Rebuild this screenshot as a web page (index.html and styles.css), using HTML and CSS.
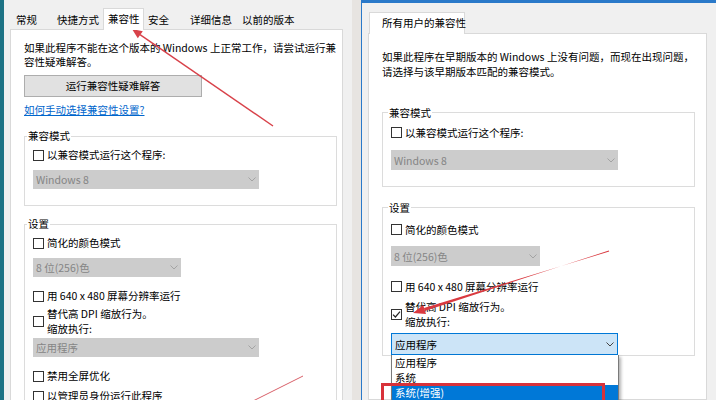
FILE: index.html
```html
<!DOCTYPE html>
<html>
<head>
<meta charset="utf-8">
<link rel="stylesheet" href="styles.css">
</head>
<body>
<div class="screen">
  <div class="desk"></div>

  <div class="win win-left">
    <div class="tabs">
      <div class="tab t1">常规</div>
      <div class="tab t2">快捷方式</div>
      <div class="tab t3 sel">兼容性</div>
      <div class="tab t4">安全</div>
      <div class="tab t5">详细信息</div>
      <div class="tab t6">以前的版本</div>
    </div>
    <div class="panel lp">
      <p class="desc">如果此程序不能在这个版本的 Windows 上正常工作，请尝试运行兼<br>容性疑难解答。</p>
      <div class="btn">运行兼容性疑难解答</div>
      <a class="link">如何手动选择兼容性设置?</a>

      <fieldset class="grp g1">
        <legend>兼容模式</legend>
        <div class="chk"><span class="box"></span>以兼容模式运行这个程序:</div>
        <div class="dd dis long s-a">Windows 8<svg class="chev" width="8" height="5" viewBox="0 0 8 5"><path d="M0.5 0.5 L4 4 L7.5 0.5"/></svg></div>
      </fieldset>

      <fieldset class="grp g2">
        <legend>设置</legend>
        <div class="chk"><span class="box"></span>简化的颜色模式</div>
        <div class="dd dis short s-a">8 位(256)色<svg class="chev" width="8" height="5" viewBox="0 0 8 5"><path d="M0.5 0.5 L4 4 L7.5 0.5"/></svg></div>
        <div class="chk s-b"><span class="box"></span>用 640 x 480 屏幕分辨率运行</div>
        <div class="chk two s-c"><span class="box"></span><span>替代高 DPI 缩放行为。<br>缩放执行:</span></div>
        <div class="dd dis long s-d">应用程序<svg class="chev" width="8" height="5" viewBox="0 0 8 5"><path d="M0.5 0.5 L4 4 L7.5 0.5"/></svg></div>
        <div class="chk s-b"><span class="box"></span>禁用全屏优化</div>
        <div class="chk s-e"><span class="box"></span>以管理员身份运行此程序</div>
      </fieldset>
    </div>
  </div>

  <div class="gap"></div>

  <div class="win win-right">
    <div class="tabs">
      <div class="tab sel rtab">所有用户的兼容性</div>
    </div>
    <div class="panel rp">
      <p class="desc">如果此程序在早期版本的 Windows 上没有问题，而现在出现问题，<br>请选择与该早期版本匹配的兼容模式。</p>

      <fieldset class="grp g1">
        <legend>兼容模式</legend>
        <div class="chk"><span class="box"></span>以兼容模式运行这个程序:</div>
        <div class="dd dis long r-a">Windows 8<svg class="chev" width="8" height="5" viewBox="0 0 8 5"><path d="M0.5 0.5 L4 4 L7.5 0.5"/></svg></div>
      </fieldset>

      <fieldset class="grp g2">
        <legend>设置</legend>
        <div class="chk"><span class="box"></span>简化的颜色模式</div>
        <div class="dd dis short r-b">8 位(256)色<svg class="chev" width="8" height="5" viewBox="0 0 8 5"><path d="M0.5 0.5 L4 4 L7.5 0.5"/></svg></div>
        <div class="chk r-c"><span class="box"></span>用 640 x 480 屏幕分辨率运行</div>
        <div class="chk two r-d"><span class="box checked"><svg width="9" height="9" viewBox="0 0 9 9"><path d="M1 4.6 L3.4 7 L8 1.6"/></svg></span><span>替代高 DPI 缩放行为。<br>缩放执行:</span></div>
        <div class="combo">
          <div class="dd active long">应用程序<svg class="chev" width="8" height="5" viewBox="0 0 8 5"><path d="M0.5 0.5 L4 4 L7.5 0.5"/></svg></div>
          <div class="menu">
            <div class="item">应用程序</div>
            <div class="item">系统</div>
            <div class="item hi">系统(增强)</div>
          </div>
          <div class="redbox"></div>
        </div>
      </fieldset>
    </div>
  </div>

  <svg class="marks" width="716" height="400" viewBox="0 0 716 400">
    <line x1="140" y1="34.7" x2="273" y2="126" stroke="#d8424a" stroke-width="1.4"/>
    <polygon points="132,29 142.8,31.2 137.8,38.3" fill="#d8424a"/>
    <polygon points="424.8,310.9 424,307.9 609.2,251.5 608.8,250.5" fill="#d93a40"/>
    <polygon points="413,313 426,314 423.2,304.9" fill="#d93a40"/>
    <line x1="303" y1="376" x2="253" y2="401" stroke="#d8606a" stroke-width="1"/>
  </svg>
</div>
</body>
</html>
```

FILE: styles.css
```css
* { box-sizing: border-box; }
html, body { margin: 0; padding: 0; }
body {
  width: 716px;
  height: 400px;
  overflow: hidden;
  font-family: "Noto Sans CJK SC", "Microsoft YaHei", sans-serif;
  font-size: 10.5px;
  color: #000;
  background: #f0f0f0;
}
.screen {
  position: relative;
  display: flex;
  width: 716px;
  height: 400px;
  overflow: hidden;
}
.desk { flex: none; width: 4px; background: #1d7385; }
.gap { flex: none; width: 9px; background: #e7e4e1; }

.win {
  flex: none;
  display: flex;
  flex-direction: column;
  height: 400px;
  background: #f0f0f0;
}
.win-left { width: 348px; padding: 8px 9px 0 6px; }
.win-right {
  width: 355px;
  border-top: 3px solid #2a79c9;
  border-left: 1px solid #2a79c9;
  padding: 9px 9px 0 6px;
}

.tabs { display: flex; align-items: flex-end; height: 21px; flex: none; }
.tab { height: 19px; line-height: 19px; white-space: nowrap; }
.tab.sel {
  position: relative;
  z-index: 1;
  height: 22px;
  margin-bottom: -1px;
  line-height: 20px;
  background: #fff;
  border: 1px solid #d9d9d9;
  border-bottom: none;
}
.t1 { width: 41px; padding-left: 6px; }
.t2 { width: 52px; padding-left: 6px; }
.t3 { width: 41px; padding-left: 4px; }
.t4 { width: 40px; padding-left: 4px; }
.t5 { width: 53px; padding-left: 6px; }
.t6 { width: 62px; padding-left: 5px; }
.rtab { margin-left: 1px; width: 96px; padding-left: 12px; }

.panel {
  flex: 1;
  background: #fff;
  border: 1px solid #d9d9d9;
}
.lp { padding: 11px 5px 0 13px; }
.rp { padding: 15px 11px 0 13px; }

.desc { margin: 0; line-height: 14px; white-space: nowrap; }
.rp .desc { line-height: 15px; }

.btn {
  margin-top: 6px;
  width: 178px;
  height: 22px;
  line-height: 20px;
  text-align: center;
  background: #e1e1e1;
  border: 1px solid #adadad;
}
.link {
  display: block;
  margin-top: 6px;
  line-height: 14px;
  color: #0066cc;
  text-decoration: underline;
}

.grp {
  margin: 12px 0 0;
  padding: 5px 0 16px 8px;
  border: 1px solid #dcdcdc;
  min-width: 0;
}
.grp legend { padding: 0 1px; margin-left: -6px; line-height: 14px; }
.lp .g2 { margin-top: 11px; padding-bottom: 0; }

.rp .grp legend { margin-left: -3px; line-height: 15px; }
.rp .g1 { margin-top: 26px; }
.rp .g2 { margin-top: 13px; padding-top: 7px; padding-bottom: 0; }

.chk { display: flex; align-items: center; line-height: 14px; white-space: nowrap; }
.rp .chk { line-height: 15px; }
.chk.two { line-height: 15px; }
.box {
  flex: none;
  width: 11px;
  height: 11px;
  margin-right: 3px;
  border: 1px solid #333;
  background: #fff;
  display: flex;
  align-items: center;
  justify-content: center;
}
.box svg path { fill: none; stroke: #222; stroke-width: 1.2; }

.dd {
  display: flex;
  align-items: center;
  justify-content: space-between;
  height: 19px;
  padding: 0 3px 0 3px;
  white-space: nowrap;
}
.dd.dis { background: #cccccc; color: #858585; }
.dd.long { width: 226px; }
.dd.short { width: 148px; }
.chev path { fill: none; stroke: #a3a3a3; stroke-width: 1; }
.rp .dd { height: 20px; }
.rp .dd.long { width: 227px; }
.rp .dd.short { width: 149px; }
.dd.active {
  height: 22px;
  padding-left: 3px;
  background: #cce4f7;
  border: 1px solid #0078d7;
  color: #000;
}
.dd.active .chev path { stroke: #444; }

/* left spacing */
.s-a { margin-top: 8px; }
.s-b { margin-top: 12px; }
.s-c { margin-top: 3px; }
.s-d { margin-top: 2px; }
.s-e { margin-top: 6px; }

/* right spacing */
.r-a { margin-top: 10px; }
.r-b { margin-top: 9px; }
.r-c { margin-top: 13px; }
.r-d { margin-top: 5px; }

.combo { position: relative; margin-top: 4px; width: 227px; height: 22px; }
.menu {
  position: absolute;
  left: 0;
  top: 22px;
  width: 228px;
  background: #fff;
  border: 1px solid #7a7a7a;
  border-top: none;
  box-shadow: 2px 2px 3px rgba(0, 0, 0, 0.3);
}
.item { line-height: 15px; padding-left: 3px; }
.item.hi { background: #0078d7; color: #fff; }
.redbox {
  position: absolute;
  left: -10px;
  top: 50px;
  width: 224px;
  height: 30px;
  border: 3px solid #d8323a;
}

.marks { position: absolute; left: 0; top: 0; pointer-events: none; }
```
